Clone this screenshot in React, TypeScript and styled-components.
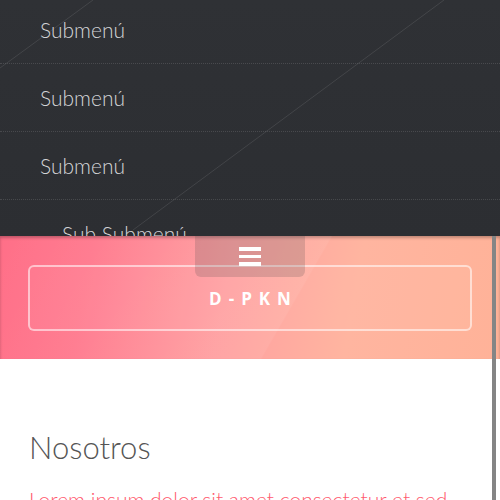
import React from "react";
import styled, { createGlobalStyle } from "styled-components";

const Global = createGlobalStyle`
  html, body { margin: 0; padding: 0; background: #fff; }
  body { font-family: Lato, "Open Sans", sans-serif; }
`;

const Page = styled.div`
  position: relative;
  width: 500px;
  height: 500px;
  overflow: hidden;
  background: #fff;
`;

const Menu = styled.nav`
  position: relative;
  height: 236px;
  overflow: hidden;
  background: linear-gradient(180deg, #2f3135 0%, #2c2e32 100%);
`;

const MenuLines = styled.svg`
  position: absolute;
  inset: 0;
  width: 500px;
  height: 236px;
  pointer-events: none;
`;

const MenuList = styled.ul`
  position: relative;
  list-style: none;
  margin: -4px 0 0;
  padding: 0;
`;

const MenuItem = styled.li<{ $indent: number }>`
  height: 67px;
  display: flex;
  align-items: center;
  padding-left: ${(p) => p.$indent}px;
  border-bottom: 1px dotted rgba(255, 255, 255, 0.13);
  color: #d4d5d7;
  font-family: Lato, sans-serif;
  font-weight: 300;
  font-size: 21px;
`;

const Header = styled.header`
  position: relative;
  height: 123px;
  box-sizing: border-box;
  padding: 29px 28px 28px;
  background: linear-gradient(100deg, #ff6f88 0%, #ff7b8f 18%, #ff9fa0 45%, #ffb5a0 70%, #ffb298 100%);
  box-shadow: inset 0 2px 3px rgba(0, 0, 0, 0.25);
`;

const Sheen = styled.div`
  position: absolute;
  inset: 0;
  background: linear-gradient(120deg, rgba(255,255,255,0) 0%, rgba(255,255,255,0.06) 58%, rgba(255,255,255,0) 58.3%);
  pointer-events: none;
`;

const Brand = styled.div`
  position: relative;
  height: 66px;
  box-sizing: border-box;
  border: 2px solid rgba(255, 255, 255, 0.55);
  border-radius: 6px;
  background: rgba(255, 255, 255, 0.04);
  display: flex;
  align-items: center;
  justify-content: center;
  color: #fff;
  font-family: "Open Sans", sans-serif;
  font-weight: 700;
  font-size: 17px;
  letter-spacing: 7px;
  padding-left: 7px;
`;

const Toggle = styled.button`
  position: absolute;
  top: 0;
  left: 195px;
  width: 110px;
  height: 41px;
  border: none;
  border-radius: 0 0 6px 6px;
  background: rgba(90, 80, 80, 0.22);
  display: flex;
  flex-direction: column;
  align-items: center;
  justify-content: center;
  gap: 4px;
  padding: 0;
  z-index: 2;
`;

const Bar = styled.span`
  display: block;
  width: 22px;
  height: 3.5px;
  background: #fff;
`;

const Scrollbar = styled.div`
  position: absolute;
  top: 236px;
  left: 492px;
  width: 4px;
  height: 264px;
  background: #858585;
  z-index: 3;
`;

const Content = styled.section`
  padding: 68px 29px 0;
`;

const Title = styled.h2`
  margin: 0;
  font-family: Lato, sans-serif;
  font-weight: 300;
  font-size: 31px;
  line-height: 40px;
  color: #555;
`;

const Lead = styled.p`
  margin: 20px 0 0;
  font-family: Lato, sans-serif;
  font-weight: 300;
  font-size: 21px;
  color: #ff5a6e;
  white-space: nowrap;
`;

export default function App() {
  return (
    <Page>
      <Global />
      <Menu>
        <MenuLines viewBox="0 0 500 236">
          <line x1="0" y1="68" x2="93" y2="0" stroke="rgba(255,255,255,0.10)" strokeWidth="1" />
          <line x1="444" y1="0" x2="133" y2="230" stroke="rgba(255,255,255,0.10)" strokeWidth="1" />
        </MenuLines>
        <MenuList>
          <MenuItem $indent={40}>Submenú</MenuItem>
          <MenuItem $indent={40}>Submenú</MenuItem>
          <MenuItem $indent={40}>Submenú</MenuItem>
          <MenuItem $indent={62}>Sub Submenú</MenuItem>
        </MenuList>
      </Menu>
      <Header>
        <Sheen />
        <Toggle aria-label="menu">
          <Bar />
          <Bar />
          <Bar />
        </Toggle>
        <Brand>D-PKN</Brand>
      </Header>
      <Content>
        <Title>Nosotros</Title>
        <Lead>Lorem ipsum dolor sit amet consectetur et sed</Lead>
      </Content>
      <Scrollbar />
    </Page>
  );
}
